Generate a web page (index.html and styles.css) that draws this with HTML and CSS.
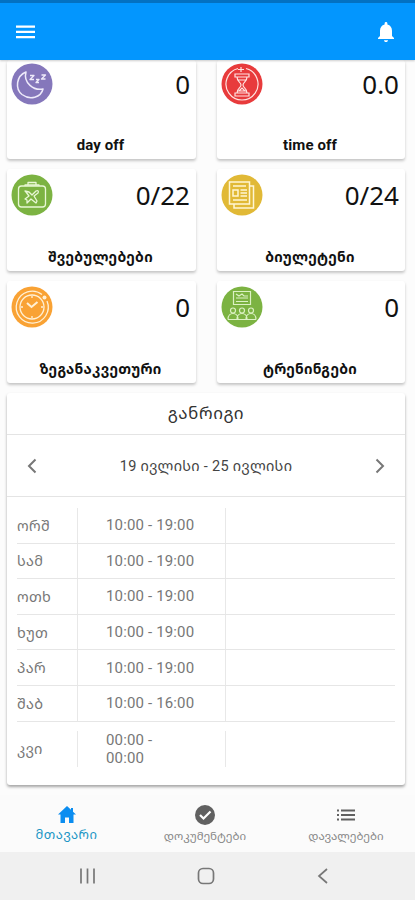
FILE: index.html
```
<!DOCTYPE html>
<html lang="ka">
<head>
    <meta charset="UTF-8">
    <meta name="viewport" content="width=device-width, initial-scale=1.0">
    <title>მთავარი</title>
    <link rel="stylesheet" href="styles.css">
</head>
<body>
    <div class="app">
        <header class="app-header">
            <svg class="menu-icon" viewBox="0 0 20 14" fill="#fff">
                <path d="M0 0.5h19v2.2H0zM0 5.7h19v2.2H0zM0 11h19v2.2H0z"/>
            </svg>
            <svg class="bell-icon" viewBox="0 0 18 20" fill="#fff">
                <path d="M9 20c1.2 0 2-.8 2-1.800H7C7 19.200 7.800 20 9 20zM15 14V8.800C15 5.700 13.300 3.200 10.400 2.500V1.500a1.400 1.400 0 0 0-2.800 0v1C4.700 3.200 3 5.700 3 8.800V14l-2 2v1h16v-1z"/>
            </svg>
        </header>

        <main class="content">
            <div class="cards">
                <div class="card">
                    <div class="card-top">
                        <svg class="card-icon" viewBox="0 0 42 42">
                            <circle cx="21" cy="21" r="20.500" fill="#8577bb"/>
                            <g fill="none" stroke="#eeeafa" stroke-width="1.500" stroke-linejoin="round">
                                <path d="M15 9C5 13 4 26 11 31.500c8 6 19 3 21-5.500C23 28 12 20 15 9z"/>
                                <path d="M19 12.500h4l-4 4h4M25 16.500h3l-3 3h3M30.500 12h4l-4 4h4" stroke-width="1.300"/>
                            </g>
                        </svg>
                        <span class="card-value">0</span>
                    </div>
                    <div class="card-label latin">day off</div>
                </div>

                <div class="card">
                    <div class="card-top">
                        <svg class="card-icon" viewBox="0 0 42 42">
                            <circle cx="21" cy="21" r="20.500" fill="#e83b3c"/>
                            <g fill="none" stroke="#ffe4e1" stroke-width="1.200">
                                <path d="M17 5.500A16 16 0 1 0 25 5.500M20 4v5M17 6.500h6"/>
                                <path d="M14 11h14v3H14zM14 30h14v3H14zM16 14c0 5 4 5 4 8s-4 3-4 8M26 14c0 5-4 5-4 8s4 3 4 8M17 17h8M18 28l3-3 3 3z"/>
                            </g>
                        </svg>
                        <span class="card-value">0.0</span>
                    </div>
                    <div class="card-label latin">time off</div>
                </div>

                <div class="card">
                    <div class="card-top">
                        <svg class="card-icon" viewBox="0 0 42 42">
                            <circle cx="21" cy="21" r="20.500" fill="#7cb342"/>
                            <g fill="none" stroke="#e8f7d5" stroke-width="1.300" stroke-linejoin="round">
                                <rect x="7.500" y="12" width="27" height="21" rx="3"/>
                                <path d="M14 12v-1h14v1M17 11V8.500h8V11"/>
                                <path d="M14 17l4 1 3 3 4-4c2-1 3 0 2 2l-4 3 3 5-1 2-5-4-4 4v-3l-2-1 4-3-3-4z"/>
                            </g>
                        </svg>
                        <span class="card-value">0/22</span>
                    </div>
                    <div class="card-label">შვებულებები</div>
                </div>

                <div class="card">
                    <div class="card-top">
                        <svg class="card-icon" viewBox="0 0 42 42">
                            <circle cx="21" cy="21" r="20.500" fill="#e1b936"/>
                            <g fill="none" stroke="#fff6d4" stroke-width="1.500">
                                <path d="M8.500 8h20v22h-20zM29 12h3.500v22H13v-3.500"/>
                                <path d="M12 12h13M12 16h5v6h-5zM19.500 16H26M19.500 19H26M19.500 22H26M12 26h14"/>
                            </g>
                        </svg>
                        <span class="card-value">0/24</span>
                    </div>
                    <div class="card-label">ბიულეტენი</div>
                </div>

                <div class="card">
                    <div class="card-top">
                        <svg class="card-icon" viewBox="0 0 42 42">
                            <circle cx="21" cy="21" r="20.500" fill="#f9a234"/>
                            <g fill="none" stroke="#fff0d5" stroke-width="1.300">
                                <path d="M31 8.500A16 16 0 1 0 36 15"/>
                                <circle cx="21" cy="21" r="12"/>
                                <path d="M21 10v2M21 30v2M10 21h2M30 21h2" />
                                <path d="M16 17l4.500 4 6-5" stroke-width="2"/>
                            </g>
                            <circle cx="33.500" cy="11.500" r="2" fill="#fff0d5"/>
                        </svg>
                        <span class="card-value">0</span>
                    </div>
                    <div class="card-label">ზეგანაკვეთური</div>
                </div>

                <div class="card">
                    <div class="card-top">
                        <svg class="card-icon" viewBox="0 0 42 42">
                            <circle cx="21" cy="21" r="20.500" fill="#7cb342"/>
                            <g fill="none" stroke="#dcf1c4" stroke-width="1.200">
                                <path d="M12.500 5.500h17v13h-17zM15 8l3 2 3-2 2 2h4M15 12h12M15 15.500h12"/>
                                <circle cx="12" cy="24.500" r="2.500"/>
                                <circle cx="21" cy="24.500" r="2.500"/>
                                <circle cx="30" cy="24.500" r="2.500"/>
                                <path d="M7 33.500c0-8 10-8 10 0M16 33.500c0-8 10-8 10 0M25 33.500c0-8 10-8 10 0M7 33.500h28"/>
                            </g>
                        </svg>
                        <span class="card-value">0</span>
                    </div>
                    <div class="card-label">ტრენინგები</div>
                </div>
            </div>

            <section class="schedule">
                <h2 class="schedule-title">განრიგი</h2>
                <div class="week-nav">
                    <svg class="arrow" viewBox="0 0 10 16"><path d="M8.500 1.500L2 8l6.500 6.500"/></svg>
                    <span class="week-range">19 ივლისი - 25 ივლისი</span>
                    <svg class="arrow" viewBox="0 0 10 16"><path d="M1.500 1.500L8 8l-6.500 6.500"/></svg>
                </div>
                <div class="days">
                    <div class="day"><span class="day-name">ორშ</span><span class="day-time">10:00 - 19:00</span><span></span></div>
                    <div class="day"><span class="day-name">სამ</span><span class="day-time">10:00 - 19:00</span><span></span></div>
                    <div class="day"><span class="day-name">ოთხ</span><span class="day-time">10:00 - 19:00</span><span></span></div>
                    <div class="day"><span class="day-name">ხუთ</span><span class="day-time">10:00 - 19:00</span><span></span></div>
                    <div class="day"><span class="day-name">პარ</span><span class="day-time">10:00 - 19:00</span><span></span></div>
                    <div class="day"><span class="day-name">შაბ</span><span class="day-time">10:00 - 16:00</span><span></span></div>
                    <div class="day day-last"><span class="day-name">კვი</span><span class="day-time">00:00 -<br>00:00</span><span></span></div>
                </div>
            </section>
        </main>

        <nav class="tabs">
            <a class="tab active">
                <svg class="tab-icon" viewBox="0 0 20 20"><path d="M10 1L1 9.500h2.500V18H8v-5.500h4V18h4.500V9.500H19L16 6.700V3h-2v1.800z"/></svg>
                <span>მთავარი</span>
            </a>
            <a class="tab">
                <svg class="tab-icon" viewBox="0 0 20 20"><circle cx="10" cy="10" r="10"/><path d="M5 10l3.500 3.500L15.500 6.500" fill="none" stroke="#fff" stroke-width="2.200"/></svg>
                <span>დოკუმენტები</span>
            </a>
            <a class="tab">
                <svg class="tab-icon" viewBox="0 0 20 20"><path d="M1 4.500h2v2H1zM5 4.500h14v2H5zM1 9h2v2H1zM5 9h14v2H5zM1 13.500h2v2H1zM5 13.500h14v2H5z"/></svg>
                <span>დავალებები</span>
            </a>
        </nav>

        <div class="system-bar">
            <svg viewBox="0 0 18 18"><path d="M2 1.500v15M8.500 1.500v15M15 1.500v15"/></svg>
            <svg viewBox="0 0 18 18"><rect x="1.500" y="1.500" width="15" height="15" rx="4.500"/></svg>
            <svg viewBox="0 0 18 18"><path d="M13 2L5 9l8 7"/></svg>
        </div>
    </div>
</body>
</html>
```
FILE: styles.css
```
* {
    box-sizing: border-box;
}
body {
    margin: 0;
    background-color: #fcfcfc;
    font-family: Roboto, "Noto Sans Georgian", "DejaVu Sans", sans-serif;
    color: #111;
}
.app {
    width: 415px;
    height: 900px;
    display: flex;
    flex-direction: column;
    overflow: hidden;
}
.app-header {
    height: 60px;
    flex-shrink: 0;
    display: flex;
    align-items: center;
    justify-content: space-between;
    padding: 0 20px 0 16px;
    background-color: #0396fe;
    border-top: 3px solid #0371c2;
    box-shadow: 0 1px 2px rgba(0, 0, 0, 0.2);
    z-index: 1;
}
.menu-icon {
    width: 20px;
    height: 14px;
}
.bell-icon {
    width: 18px;
    height: 20px;
}
.content {
    height: 735px;
    flex-shrink: 0;
    padding: 0 10px 0 7px;
}
.cards {
    display: grid;
    grid-template-columns: 189px 188px;
    grid-template-rows: 99px 102px 102px;
    column-gap: 21px;
    row-gap: 10px;
}
.card {
    display: flex;
    flex-direction: column;
    justify-content: space-between;
    background-color: #fff;
    border-radius: 3px;
    padding: 5px 6px 5px 4px;
    box-shadow: 0 2px 3px rgba(0, 0, 0, 0.22);
}
.card:nth-child(-n+2) {
    padding-top: 3px;
}
.card-top {
    display: flex;
    justify-content: space-between;
    align-items: center;
    height: 42px;
}
.card-icon {
    width: 42px;
    height: 42px;
}
.card-value {
    font-family: "Noto Sans", sans-serif;
    font-size: 26px;
    line-height: 42px;
}
.card-label {
    text-align: center;
    font-size: 14px;
    line-height: 18px;
    font-weight: bold;
    letter-spacing: 0.3px;
}
.latin {
    font-size: 15px;
    letter-spacing: 0.1px;
}
.schedule {
    height: 392px;
    margin-top: 10px;
    background-color: #fff;
    border-radius: 3px;
    box-shadow: 0 2px 3px rgba(0, 0, 0, 0.35);
}
.schedule-title {
    height: 42px;
    margin: 0;
    font-size: 17px;
    line-height: 41px;
    font-weight: normal;
    letter-spacing: 0.6px;
    text-align: center;
    color: #333;
    border-bottom: 1px solid #e4e4e4;
}
.week-nav {
    height: 62px;
    padding: 0 20px;
    display: flex;
    align-items: center;
    justify-content: space-between;
    border-bottom: 1px solid #e4e4e4;
}
.week-range {
    font-size: 14.5px;
    letter-spacing: 0.3px;
    color: #444;
}
.arrow {
    width: 10px;
    height: 16px;
    fill: none;
    stroke: #777;
    stroke-width: 2;
}
.days {
    padding: 11px 10px 0;
}
.day {
    display: grid;
    grid-template-columns: 60px 148px 1fr;
    height: 35.6px;
    border-bottom: 1px solid #e6e6e6;
    font-size: 15px;
    color: #777;
}
.day span {
    display: flex;
    align-items: center;
}
.day span + span {
    border-left: 1px solid #e8e8e8;
}
.day .day-name {
    font-size: 14.5px;
    letter-spacing: 0.3px;
}
.day .day-time {
    padding-left: 28px;
    line-height: 18px;
    letter-spacing: 0.15px;
}
.day-last {
    margin-top: 9px;
    border-bottom: none;
}
.tabs {
    height: 57px;
    flex-shrink: 0;
    display: grid;
    grid-template-columns: 133px 145px 1fr;
    background-color: #fbfbfb;
}
.tab {
    display: flex;
    flex-direction: column;
    align-items: center;
    padding-top: 10px;
    padding-right: 1px;
    font-size: 11.5px;
    line-height: 22px;
    color: #888;
}
.tab-icon {
    width: 20px;
    height: 20px;
    fill: #616161;
}
.tab.active {
    padding-right: 0;
    font-size: 13px;
    letter-spacing: 0.5px;
    line-height: 20px;
    color: #1c96c5;
}
.tab.active .tab-icon {
    fill: #0b8df0;
}
.system-bar {
    height: 48px;
    flex-shrink: 0;
    display: flex;
    justify-content: space-between;
    align-items: center;
    padding: 0 83px 0 79px;
    background-color: #f0f0f0;
}
.system-bar svg {
    width: 18px;
    height: 18px;
    fill: none;
    stroke: #777;
    stroke-width: 1.7;
}
```
